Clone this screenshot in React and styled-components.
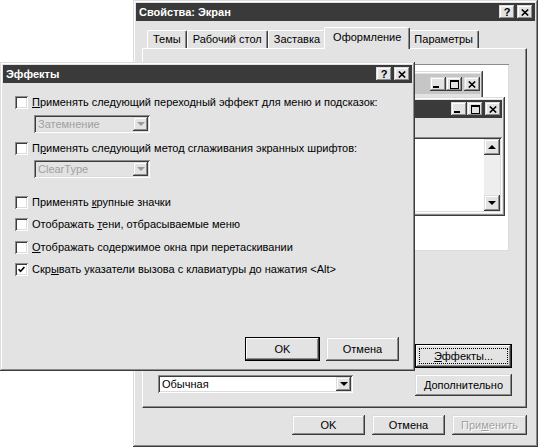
import React from "react";
import styled, { createGlobalStyle, css } from "styled-components";

const FACE = "#e3e3e3";
const DARK = "#3c3c3c";
const SHADOW = "#8c8c8c";
const LIGHT = "#ffffff";
const SOFT = "#dcdcdc";

const Global = createGlobalStyle`
  html, body { margin: 0; padding: 0; background: #fff; }
  body { font-family: "Liberation Sans", Arial, sans-serif; font-size: 11px; color: #000; }
  * { box-sizing: border-box; }
`;

const raised = css`
  box-shadow: inset -1px -1px ${DARK}, inset 1px 1px ${SOFT}, inset -2px -2px ${SHADOW}, inset 2px 2px ${LIGHT};
`;
const sunken = css`
  box-shadow: inset 1px 1px ${SHADOW}, inset -1px -1px ${LIGHT}, inset 2px 2px ${DARK}, inset -2px -2px ${SOFT};
`;

const Desktop = styled.div`
  position: relative;
  width: 538px;
  height: 448px;
  overflow: hidden;
  background: #fff;
`;

const Window = styled.div`
  position: absolute;
  left: ${(p) => p.$left}px;
  top: ${(p) => p.$top}px;
  width: ${(p) => p.$w}px;
  height: ${(p) => p.$h}px;
  background: ${FACE};
  padding: 3px;
  display: flex;
  flex-direction: column;
  ${raised};
`;

const TitleBar = styled.div`
  flex: none;
  height: ${(p) => p.$h || 18}px;
  display: flex;
  align-items: center;
  gap: 2px;
  padding: 0 ${(p) => p.$pr ?? 2}px 0 3px;
  background: ${(p) => (p.$inactive ? "#c6c6c6" : "#3a3a3a")};
  color: #fff;
  font-weight: bold;
  font-size: 11px;
`;

const TitleText = styled.span`
  flex: 1;
  white-space: nowrap;
  overflow: hidden;
`;

const CapGroup = styled.div`
  display: flex;
  gap: ${(p) => p.$gap ?? 2}px;
`;

const CapButton = styled.div`
  width: 16px;
  height: 14px;
  margin-left: ${(p) => p.$ml || 0}px;
  background: ${FACE};
  ${raised};
  display: flex;
  align-items: ${(p) => (p.$bottom ? "flex-end" : "center")};
  justify-content: center;
  padding-bottom: ${(p) => (p.$bottom ? 3 : 0)}px;
  color: #000;
  font-size: 11px;
  font-weight: bold;
  line-height: 1;
`;

const HelpGlyph = styled.span`
  font-family: "Liberation Sans", Arial, sans-serif;
  font-weight: bold;
  font-size: 11px;
  margin-top: 1px;
`;

const CloseIcon = () => (
  <svg width="8" height="7" viewBox="0 0 8 7">
    <path d="M0.8 0.5L7.2 6.5M7.2 0.5L0.8 6.5" stroke="#000" strokeWidth="1.6" />
  </svg>
);
const MinIcon = () => (
  <svg width="8" height="2" viewBox="0 0 8 2" style={{ marginRight: 2 }}>
    <rect x="0" y="0" width="6" height="2" fill="#000" />
  </svg>
);
const MaxIcon = () => (
  <svg width="9" height="9" viewBox="0 0 9 9">
    <rect x="0.5" y="0.5" width="8" height="8" fill="none" stroke="#000" />
    <rect x="0" y="0" width="9" height="2" fill="#000" />
  </svg>
);

const Help = () => (
  <CapButton>
    <HelpGlyph>?</HelpGlyph>
  </CapButton>
);
const Close = () => (
  <CapButton>
    <CloseIcon />
  </CapButton>
);

/* ---------- Main window ---------- */

const MainBody = styled.div`
  flex: 1;
  display: flex;
  flex-direction: column;
  padding: 6px 8px 0 6px;
`;

const TabStrip = styled.div`
  height: 21px;
  display: flex;
  align-items: flex-end;
  padding-left: 5px;
  position: relative;
  z-index: 2;
`;

const Tab = styled.div`
  height: ${(p) => (p.$active ? 22 : 18)}px;
  margin: 0 ${(p) => (p.$active ? -2 : 0)}px ${(p) => (p.$active ? -1 : 0)}px;
  padding: ${(p) => (p.$active ? "3px 8px 0" : "2px 5px 0")};
  background: ${FACE};
  border-top: 1px solid ${LIGHT};
  border-left: 1px solid ${LIGHT};
  border-right: 1px solid ${DARK};
  border-radius: 2px 2px 0 0;
  box-shadow: inset -1px 0 ${SHADOW};
  white-space: nowrap;
  position: relative;
  z-index: ${(p) => (p.$active ? 3 : 1)};
`;

const TabPanel = styled.div`
  height: 360px;
  display: flex;
  flex-direction: column;
  padding: 15px 14px 0 15px;
  background: ${FACE};
  border-top: 1px solid ${LIGHT};
  border-left: 1px solid ${LIGHT};
  border-right: 1px solid ${DARK};
  border-bottom: 1px solid ${DARK};
  box-shadow: inset -1px -1px ${SHADOW};
`;

const Preview = styled.div`
  position: relative;
  height: 187px;
  margin: 0 3px 0 2px;
  background: #fff;
  overflow: hidden;
  box-shadow: inset 1px 1px ${SHADOW}, inset -1px -1px ${SOFT};
`;

const MenuBand = styled.div`
  height: 19px;
  flex: none;
  background: ${FACE};
`;

const ClientArea = styled.div`
  flex: 1;
  display: flex;
  justify-content: flex-end;
  background: #fff;
  padding: 2px;
  ${sunken};
`;

const ScrollBar = styled.div`
  width: 16px;
  display: flex;
  flex-direction: column;
`;

const ScrollTrack = styled.div`
  flex: 1;
  background: #eeeeee;
`;

const ScrollBtn = styled.div`
  width: 16px;
  height: 16px;
  background: ${FACE};
  ${raised};
  display: flex;
  align-items: center;
  justify-content: center;
`;

const Arrow = styled.span`
  width: 0;
  height: 0;
  border-left: 4px solid transparent;
  border-right: 4px solid transparent;
  ${(p) =>
    p.$up
      ? css`border-bottom: 4px solid ${p.$color || "#000"};`
      : css`border-top: 4px solid ${p.$color || "#000"};`}
`;

const Controls = styled.div`
  margin-top: 93px;
  display: flex;
  justify-content: space-between;
  align-items: flex-end;
`;

const ButtonColumn = styled.div`
  display: flex;
  flex-direction: column;
  gap: 6px;
`;

const Footer = styled.div`
  margin-top: 7px;
  display: flex;
  justify-content: flex-end;
  gap: 7px;
`;

/* ---------- Shared controls ---------- */

const Button = styled.div`
  width: ${(p) => p.$w}px;
  height: ${(p) => p.$h}px;
  background: ${FACE};
  display: flex;
  align-items: center;
  justify-content: center;
  color: ${(p) => (p.$disabled ? "#a0a0a0" : "#000")};
  text-shadow: ${(p) => (p.$disabled ? "1px 1px #fff" : "none")};
  white-space: nowrap;
  ${(p) =>
    p.$default
      ? css`
          box-shadow: inset 0 0 0 1px #000, inset -2px -2px ${DARK}, inset 2px 2px ${LIGHT},
            inset -3px -3px ${SHADOW};
        `
      : raised};
`;

const FocusRing = styled.span`
  display: flex;
  align-items: center;
  justify-content: center;
  width: calc(100% - 8px);
  height: calc(100% - 8px);
  border: 1px dotted #000;
`;

const Acc = styled.span`
  text-decoration: underline;
  text-underline-offset: 1px;
`;

const Combo = styled.div`
  width: ${(p) => p.$w}px;
  height: ${(p) => p.$h}px;
  margin: ${(p) => p.$mt || 0}px 0 ${(p) => p.$mb || 0}px ${(p) => p.$ml || 0}px;
  display: flex;
  align-items: stretch;
  padding: 2px;
  background: ${(p) => (p.$disabled ? FACE : "#fff")};
  color: ${(p) => (p.$disabled ? "#a0a0a0" : "#000")};
  ${sunken};
`;

const ComboText = styled.span`
  flex: 1;
  display: flex;
  align-items: center;
  padding-left: 2px;
  white-space: nowrap;
`;

const ComboArrow = styled.div`
  width: 15px;
  background: ${FACE};
  ${raised};
  display: flex;
  align-items: center;
  justify-content: center;
`;

/* ---------- Effects dialog ---------- */

const DialogBody = styled.div`
  flex: 1;
  display: flex;
  flex-direction: column;
  padding: 0 13px 7px 12px;
`;

const CheckRow = styled.div`
  height: 16px;
  margin-top: ${(p) => p.$mt}px;
  display: flex;
  align-items: center;
  gap: 4px;
  white-space: nowrap;
`;

const CheckBox = styled.span`
  width: 13px;
  height: 13px;
  flex: none;
  background: #fff;
  display: flex;
  align-items: center;
  justify-content: center;
  ${sunken};
`;

const DialogButtons = styled.div`
  margin-top: auto;
  display: flex;
  justify-content: flex-end;
  gap: 6px;
`;

const CheckMark = () => (
  <svg width="7" height="7" viewBox="0 0 7 7">
    <path d="M0.6 3.2L2.6 5.3L6.4 1" stroke="#000" strokeWidth="1.6" fill="none" />
  </svg>
);

const Check = ({ checked, children, mt }) => (
  <CheckRow $mt={mt}>
    <CheckBox>{checked && <CheckMark />}</CheckBox>
    <span>{children}</span>
  </CheckRow>
);

const PreviewCaps = () => (
  <CapGroup $gap={0}>
    <CapButton $bottom>
      <MinIcon />
    </CapButton>
    <CapButton>
      <MaxIcon />
    </CapButton>
    <CapButton $ml={2}>
      <CloseIcon />
    </CapButton>
  </CapGroup>
);

export default function App() {
  return (
    <>
      <Global />
      <Desktop>
        <Window $left={133} $top={0} $w={405} $h={447}>
          <TitleBar>
            <TitleText>Свойства: Экран</TitleText>
            <CapGroup>
              <Help />
              <Close />
            </CapGroup>
          </TitleBar>
          <MainBody>
            <TabStrip>
              <Tab>Темы</Tab>
              <Tab>Рабочий стол</Tab>
              <Tab>Заставка</Tab>
              <Tab $active>Оформление</Tab>
              <Tab>Параметры</Tab>
            </TabStrip>
            <TabPanel>
              <Preview>
                <Window $left={10} $top={7} $w={313} $h={130}>
                  <TitleBar $inactive $h={20} $pr={0}>
                    <TitleText />
                    <PreviewCaps />
                  </TitleBar>
                </Window>
                <Window $left={20} $top={33} $w={325} $h={119}>
                  <TitleBar $pr={1}>
                    <TitleText />
                    <PreviewCaps />
                  </TitleBar>
                  <MenuBand />
                  <ClientArea>
                    <ScrollBar>
                      <ScrollBtn>
                        <Arrow $up />
                      </ScrollBtn>
                      <ScrollTrack />
                      <ScrollBtn>
                        <Arrow />
                      </ScrollBtn>
                    </ScrollBar>
                  </ClientArea>
                </Window>
              </Preview>
              <Controls>
                <Combo $w={195} $h={18} $mb={3}>
                  <ComboText>Обычная</ComboText>
                  <ComboArrow>
                    <Arrow />
                  </ComboArrow>
                </Combo>
                <ButtonColumn>
                  <Button $w={97} $h={24} $default>
                    <FocusRing>
                      <Acc>Э</Acc>ффекты...
                    </FocusRing>
                  </Button>
                  <Button $w={97} $h={22}>
                    <Acc>Д</Acc>ополнительно
                  </Button>
                </ButtonColumn>
              </Controls>
            </TabPanel>
            <Footer>
              <Button $w={73} $h={20}>
                OK
              </Button>
              <Button $w={73} $h={20}>
                Отмена
              </Button>
              <Button $w={75} $h={20} $disabled>
                При<Acc>м</Acc>енить
              </Button>
            </Footer>
          </MainBody>
        </Window>

        <Window $left={0} $top={62} $w={415} $h={309}>
          <TitleBar>
            <TitleText>Эффекты</TitleText>
            <CapGroup>
              <Help />
              <Close />
            </CapGroup>
          </TitleBar>
          <DialogBody>
            <Check mt={11}>
              <Acc>П</Acc>рименять следующий переходный эффект для меню и подсказок:
            </Check>
            <Combo $w={116} $h={18} $mt={5} $ml={19} $disabled>
              <ComboText>Затемнение</ComboText>
              <ComboArrow>
                <Arrow $color="#9a9a9a" />
              </ComboArrow>
            </Combo>
            <Check mt={7}>
              П<Acc>р</Acc>именять следующий метод сглаживания экранных шрифтов:
            </Check>
            <Combo $w={116} $h={18} $mt={4} $ml={19} $disabled>
              <ComboText>ClearType</ComboText>
              <ComboArrow>
                <Arrow $color="#9a9a9a" />
              </ComboArrow>
            </Combo>
            <Check mt={16}>
              Применять <Acc>к</Acc>рупные значки
            </Check>
            <Check mt={6}>
              Отображать <Acc>т</Acc>ени, отбрасываемые меню
            </Check>
            <Check mt={7}>
              <Acc>О</Acc>тображать содержимое окна при перетаскивании
            </Check>
            <Check mt={6} checked>
              Скр<Acc>ы</Acc>вать указатели вызова с клавиатуры до нажатия &lt;Alt&gt;
            </Check>
            <DialogButtons>
              <Button $w={75} $h={24} $default>
                OK
              </Button>
              <Button $w={73} $h={24}>
                Отмена
              </Button>
            </DialogButtons>
          </DialogBody>
        </Window>
      </Desktop>
    </>
  );
}
